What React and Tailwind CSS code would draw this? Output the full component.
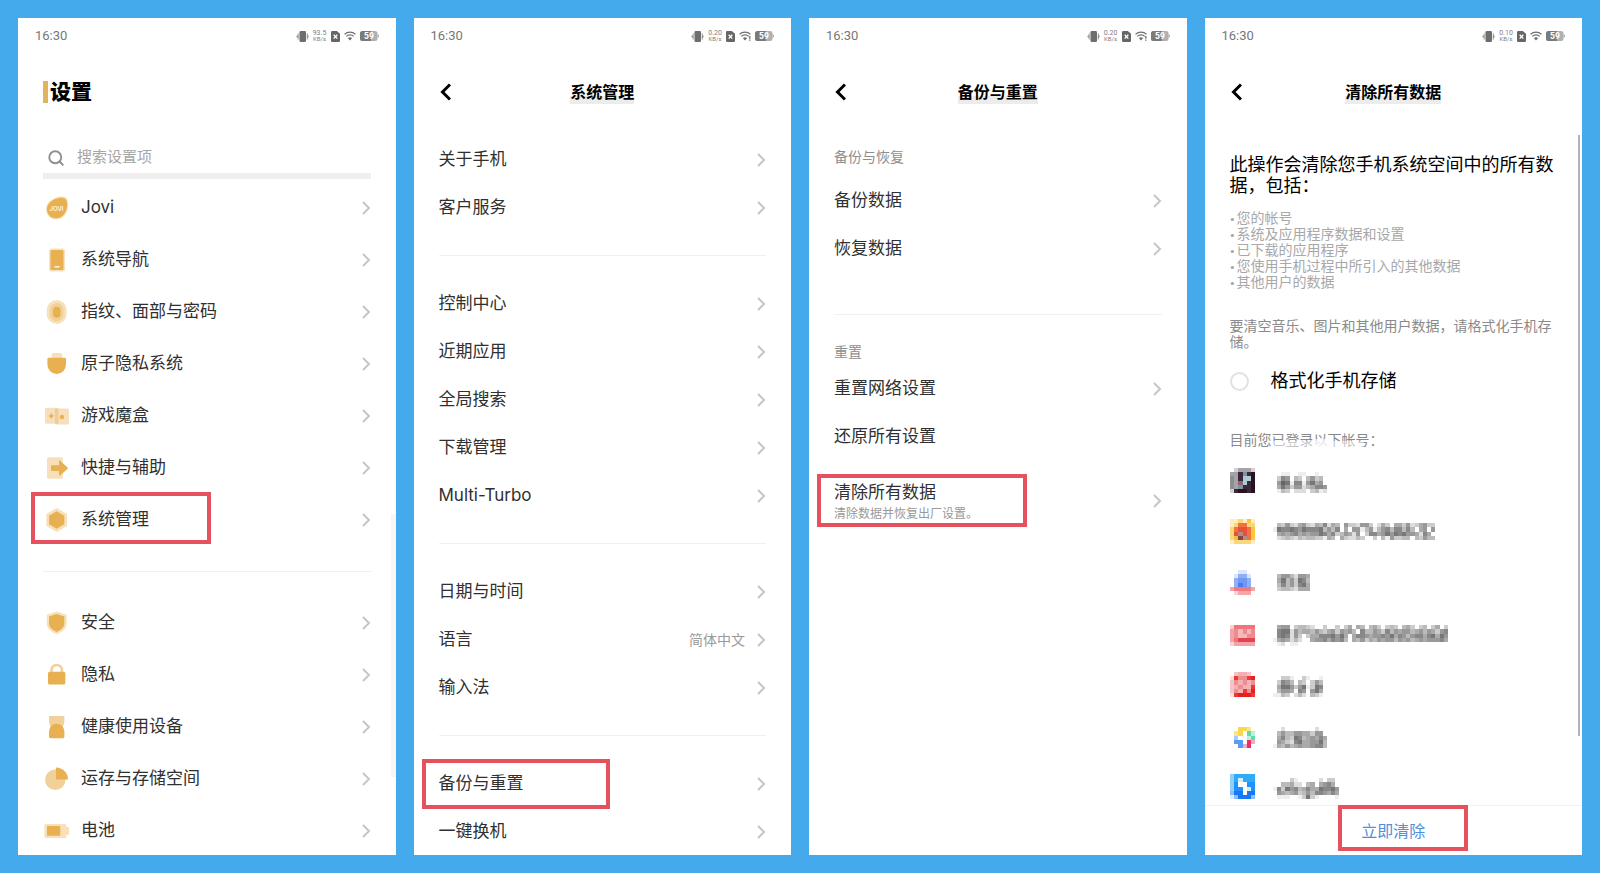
import React from 'react'
import { Search } from 'lucide-react'

const MAIN = '#e8b050'
const SOFT = '#f0d19a'
const PALE = '#f7e1bb'

const icons = {
  jovi: (
    <>
      <path d="M14 .8c6-1 9.200 1.400 9.200 6.800C23.200 17 18.500 23.400 11 23.400 4.800 23.400 1 18.800 1 13 1 6.500 7.500 1.900 14 .8z" fill={PALE} />
      <path d="M14 1.900c5.300-.9 8.200 1.100 8.200 5.900 0 8.600-4.400 14.500-11.200 14.500C5.400 22.300 2 18.200 2 13 2 7.200 8 2.900 14 1.900z" fill={MAIN} />
      <text x="11.500" y="15" textAnchor="middle" fontSize="6" fontWeight="600" fill="#fff7e6">JOVI</text>
    </>
  ),
  nav: (
    <>
      <rect x="4" y=".5" width="16" height="23" rx="2.500" fill={PALE} />
      <rect x="5.500" y="2" width="13" height="20" rx="1.500" fill={MAIN} />
      <rect x="9.500" y="18" width="5" height="1.500" fill="#fff7e6" />
    </>
  ),
  finger: (
    <>
      <rect x="1.700" y="0" width="20" height="24" rx="10" fill={PALE} />
      <rect x="5" y="3" width="13.500" height="18.500" rx="6.700" fill={SOFT} />
      <rect x="8" y="6.700" width="7.500" height="11" rx="3.700" fill={MAIN} />
    </>
  ),
  atom: (
    <>
      <rect x="6.700" y="1" width="10.500" height="6" rx="1" fill={PALE} />
      <path d="M3.500 5.800h16.300a1.200 1.200 0 0 1 1.200 1.200v5.600a9.300 9.300 0 0 1-18.600 0V7a1.200 1.200 0 0 1 1.100-1.200z" fill={MAIN} />
    </>
  ),
  game: (
    <>
      <rect x="0" y="3.700" width="13.500" height="16" rx="1.500" fill="#f6dfba" />
      <rect x="10" y="4.500" width="14" height="16" rx="1.500" fill="#f6dfba" />
      <rect x="10" y="4.500" width="3.500" height="15.200" fill="#edcd95" />
      <path d="M6.300 9.500v5M3.800 12h5" stroke={MAIN} strokeWidth="1.600" />
      <circle cx="16.900" cy="13" r="2.200" fill={MAIN} />
    </>
  ),
  quick: (
    <>
      <rect x="2" y="1.200" width="15.800" height="21.500" rx="1.500" fill="#f6dfba" />
      <path d="M7 9.200h7V5.500c0-.9.800-1.200 1.400-.6l7 6.300c.6.600.6 1.200 0 1.800l-7 6.300c-.6.600-1.400.3-1.400-.6V15H7a1 1 0 0 1-1-1v-3.800a1 1 0 0 1 1-1z" fill={MAIN} />
    </>
  ),
  system: (
    <>
      <path d="M11.700 0l10.300 6v12l-10.300 6L1.300 18V6z" fill={PALE} />
      <path d="M11.700 3.300l7.600 4.400v8.600l-7.600 4.400L4 16.300V7.700z" fill={MAIN} />
    </>
  ),
  shield: (
    <>
      <path d="M11.700.6l10 3.200v8.500c0 5-4 8.700-10 11-6-2.300-10-6-10-11V3.800z" fill={PALE} />
      <path d="M11.700 3l7.600 2.500v6.800c0 3.700-2.900 6.600-7.600 8.600C7 18.900 4 16 4 12.300V5.500z" fill={MAIN} />
    </>
  ),
  lock: (
    <>
      <path d="M6.500 11V7.200a5.200 5.200 0 0 1 10.400 0V11" fill="none" stroke={SOFT} strokeWidth="2.600" />
      <rect x="3" y="8.800" width="17.300" height="12.700" rx="1.500" fill={MAIN} />
    </>
  ),
  health: (
    <>
      <path d="M5 .9h13.400a1 1 0 0 1 1 1V7l-1.500 5H5.500L4 7V1.900a1 1 0 0 1 1-1z" fill={SOFT} />
      <path d="M4 16.500a7.700 7.700 0 0 1 15.400 0v5.300a1.400 1.400 0 0 1-1.400 1.400H5.400A1.400 1.400 0 0 1 4 21.800z" fill={MAIN} />
    </>
  ),
  pie: (
    <>
      <circle cx="10.300" cy="12.800" r="10.200" fill={SOFT} />
      <path d="M11 12.500V.4a12 12 0 0 1 12 12.100z" fill={MAIN} />
    </>
  ),
  battery: (
    <>
      <rect x="-.6" y="5" width="22" height="14" rx="1.500" fill={PALE} />
      <path d="M21 8h2.200a.9.900 0 0 1 .9.900v5.900a.9.900 0 0 1-.9.900H21z" fill={PALE} />
      <rect x="2" y="7" width="13.300" height="9.800" rx=".8" fill={MAIN} />
    </>
  ),
}

const settings = [
  [
    { icon: 'jovi', label: 'Jovi' },
    { icon: 'nav', label: '系统导航' },
    { icon: 'finger', label: '指纹、面部与密码' },
    { icon: 'atom', label: '原子隐私系统' },
    { icon: 'game', label: '游戏魔盒' },
    { icon: 'quick', label: '快捷与辅助' },
    { icon: 'system', label: '系统管理', marked: true },
  ],
  [
    { icon: 'shield', label: '安全' },
    { icon: 'lock', label: '隐私' },
    { icon: 'health', label: '健康使用设备' },
    { icon: 'pie', label: '运存与存储空间' },
    { icon: 'battery', label: '电池' },
  ],
]

const management = [
  [{ label: '关于手机' }, { label: '客户服务' }],
  [
    { label: '控制中心' },
    { label: '近期应用' },
    { label: '全局搜索' },
    { label: '下载管理' },
    { label: 'Multi-Turbo' },
  ],
  [{ label: '日期与时间' }, { label: '语言', value: '简体中文' }, { label: '输入法' }],
  [{ label: '备份与重置', marked: true }, { label: '一键换机' }],
]

const erased = [
  '您的帐号',
  '系统及应用程序数据和设置',
  '已下载的应用程序',
  '您使用手机过程中所引入的其他数据',
  '其他用户的数据',
]

// Icons are 6x6 cells with their own palette, names are grey levels from 0 (white) to 9.
const accounts = [
  {
    palette: { a: '#a3a3a9', b: '#d2d2d6', c: '#3b2836', d: '#84909a', e: '#a9cdd2', f: '#2a1223', g: '#8c6678', h: '#8d8d94' },
    icon: [' baaab', 'aacdcf', 'haceef', 'hagecf', 'hadccf', 'bcffcf'],
    name: ['', '0011001100100', '0376043046340', '0698177168560', '0586366245776', '0143022203412'],
  },
  {
    palette: { a: '#fdedc0', b: '#fbd779', c: '#f7b94a', d: '#ef7340', e: '#e6513a', f: '#7c4a4c', g: '#b98a7c', h: '#fbc53f' },
    icon: ['aabaha', 'abddbb', 'bdeedh', 'begedh', 'bcfgdh', 'abbbba'],
    name: [
      '',
      '0436325632547254063326630253055362356330',
      '1877876877784647050661461467477474056060',
      '0565675656687573465260377568687866527500',
      '0234324344331540532243003041633440436440',
      '',
    ],
  },
  {
    palette: { a: '#dbe6fd', b: '#8fb0f8', c: '#6f98f5', d: '#4b7df0', e: '#f6a5a8', f: '#f07a80', g: '#fbd5d6' },
    icon: ['  aa  ', ' abba ', ' bccb ', ' bdcb ', 'effffe', ' geee '],
    name: ['', '046642665', '058463874', '047463785', '034432555', ''],
  },
  {
    palette: { a: '#fad0d3', b: '#f0757b', c: '#ee8b91', d: '#f5b8bb', e: '#e2444f', f: '#f3a2a7' },
    icon: ['', 'abbbbb', 'fcdcdc', 'fcddcc', 'fbeeee', 'afffff'],
    name: [
      '',
      '0566034432003003035054045303430453034035030',
      '0788264554643563656407446537465664564653670',
      '0787263035577786850577656676857646775785860',
      '1565242005667576740546354656646564565666750',
      '0120110000000000000000000000000000000000000',
    ],
  },
  {
    palette: { a: '#f7c3c5', b: '#e93a38', c: '#ee8e90', d: '#e6201c', e: '#f3b1b3', f: '#fbdedf' },
    icon: [' aeea ', 'fbccbd', 'acecec', 'aeceeb', 'acebcd', 'fbdddb'],
    name: ['', '0033100310010', '0376404303640', '0588636813870', '0466507606850', '1143024204310'],
  },
  {
    palette: { a: '#fbe48a', b: '#f9d84e', c: '#5edca4', d: '#bdf0d9', e: '#5b9cf3', f: '#e62f6b', g: '#a9cbf9', h: '#f6a9c2' },
    icon: ['', '  bba ', ' ab cd', ' g  dc', ' ee fh', '  ehf '],
    name: ['', '0020000000200', '0464466553660', '0574387456575', '0653278556684', '1546456556774'],
  },
  {
    palette: { a: '#8fd0fb', b: '#2fabf8', c: '#1f93fa', d: '#d6ecfd', e: '#ffffff', f: '#1678f8', g: '#8dbcfb' },
    icon: ['abbbbb', 'abdbbb', 'aceecc', 'accedc', 'gffeff', 'dgfffg'],
    name: ['', '0000310000020330', '0044522045056750', '1738674575587786', '0654563464776575', '0111001383100001'],
  },
]

const grey = (level) => {
  const v = 255 - Number(level) * 17
  return `rgb(${v},${v},${v})`
}

const Mosaic = ({ rows, color, label }) => {
  const cols = Math.max(...rows.map((row) => row.length))
  return (
    <svg className="h-[25px] w-auto shrink-0" viewBox={`0 0 ${cols} 6`} shapeRendering="crispEdges" role="img" aria-label={label}>
      {rows.map((row, y) =>
        [...row].map((cell, x) =>
          cell === ' ' || cell === '0' ? null : (
            <rect key={`${x}-${y}`} x={x} y={y} width="1" height="1" fill={color(cell)} />
          )
        )
      )}
    </svg>
  )
}

const Chevron = () => (
  <svg className="h-[14px] w-[9px] shrink-0" viewBox="0 0 9 14" fill="none" stroke="#c6c6c6" strokeWidth="2">
    <path d="M1 1l6 6-6 6" />
  </svg>
)

const Mark = ({ className }) => (
  <span className={`pointer-events-none absolute border-4 border-[#e5525d] ${className}`} />
)

const StatusBar = ({ speed, alert }) => (
  <div className="flex h-[34px] shrink-0 items-center justify-between px-[17px] pt-[2px] text-[#777]">
    <time className="font-[Roboto] text-[13px]">16:30</time>
    <div className="flex items-center gap-1">
      <svg className="h-[11px] w-[13px]" viewBox="0 0 13 11" fill="#6e6e6e">
        <rect x="3.500" y="0" width="6.500" height="11" rx="1.200" />
        <path d="M2.700 2.500v6h-1v-1.800L0 5.500l1.700-1.200V2.500zM10.800 2.500v6h1V6.700L13 5.500l-1.200-1.200V2.500z" opacity=".75" />
      </svg>
      <div className="w-[14px] text-center font-[Roboto] text-[7px] leading-[6px] text-[#808080]">
        <p>{speed}</p>
        <p className="text-[6px]">KB/s</p>
      </div>
      <svg className="h-[11px] w-[9px]" viewBox="0 0 9 11">
        <path d="M1.200 0h4.600L9 2.800v7A1.200 1.200 0 0 1 7.800 11H1.200A1.200 1.200 0 0 1 0 9.800V1.200A1.200 1.200 0 0 1 1.200 0z" fill="#666" />
        <path d="M2.700 3.800l3.600 3.800M6.300 3.800L2.700 7.600" stroke="#fff" strokeWidth="1.300" />
      </svg>
      <svg className="h-[10px] w-3" viewBox="0 0 12 10" fill="none" stroke="#6e6e6e" strokeWidth="1.300">
        <path d="M.5 3.400a7.800 7.800 0 0 1 11 0M2.300 5.400a5.200 5.200 0 0 1 7.400 0" />
        <path d="M6 9.500L3.900 7.300a3 3 0 0 1 4.200 0z" fill="#6e6e6e" stroke="none" />
        {alert && <path d="M10.800 5v2.700M10.800 8.500v1.200" />}
      </svg>
      <svg className="h-[10px] w-[19px]" viewBox="0 0 19 10">
        <rect x="0" y="0" width="17.500" height="10" rx="2.500" fill="#b0b0b0" />
        <path d="M2.500 0H11v10H2.500A2.500 2.500 0 0 1 0 7.500v-5A2.500 2.500 0 0 1 2.500 0z" fill="#7a7a7a" />
        <path d="M17.500 3.200l1.500.8v2l-1.500.8z" fill="#b0b0b0" />
        <text x="9" y="8" textAnchor="middle" fontSize="8.500" fontWeight="800" fontFamily="Roboto, sans-serif" fill="#fff">59</text>
      </svg>
    </div>
  </div>
)

const Screen = ({ speed, alert, children }) => (
  <section className="relative flex min-w-0 flex-col overflow-hidden bg-white">
    <StatusBar speed={speed} alert={alert} />
    {children}
  </section>
)

const TitleBar = ({ title }) => (
  <header className="grid h-20 shrink-0 grid-cols-[1fr_auto_1fr] items-center px-[25px]">
    <button type="button" aria-label="返回" className="w-fit">
      <svg className="h-[18px] w-3" viewBox="0 0 12 18" fill="none" stroke="#000" strokeWidth="3">
        <path d="M11 1.500L3.500 9l7.500 7.500" />
      </svg>
    </button>
    <h2 className="bg-[linear-gradient(transparent_65%,#ececec_65%)] text-base font-bold text-black">{title}</h2>
  </header>
)

const Divider = ({ className }) => <hr className={`h-px shrink-0 border-0 bg-[#f0f0f0] ${className}`} />

const Row = ({ label, value, marked, arrow = true, mark }) => (
  <button type="button" className="relative flex h-12 w-full shrink-0 items-center gap-3 text-left">
    <span className="flex-1 text-[17px]">{label}</span>
    {value && <span className="text-sm text-[#9a9a9a]">{value}</span>}
    {arrow && <Chevron />}
    {marked && <Mark className={mark} />}
  </button>
)

const SettingsScreen = () => (
  <Screen speed="93.5">
    <header className="flex h-20 shrink-0 items-center gap-[2px] px-[25px]">
      <span className="h-[22px] w-[5px] bg-[#e2b25c]" />
      <h1 className="text-[21px] font-black text-black">设置</h1>
    </header>
    <div className="px-[25px]">
      <label className="flex h-[47px] items-center gap-3 border-b-6 border-[#efefef] pt-[10px] pl-1">
        <Search className="h-[18px] w-[18px] text-[#8e8e8e]" strokeWidth={2.5} />
        <input
          type="search"
          aria-label="搜索设置项"
          placeholder="搜索设置项"
          className="min-w-0 flex-1 text-[15px] outline-none placeholder:text-[#a6a6a6]"
        />
      </label>
      <div className="pt-[3px]">
        {settings.map((group, i) => (
          <React.Fragment key={i}>
            {i > 0 && <Divider className="my-[25px]" />}
            {group.map(({ icon, label, marked }) => (
              <button key={label} type="button" className="relative flex h-[52px] w-full items-center gap-3 pl-[2px] text-left">
                <svg className="h-6 w-6 shrink-0 overflow-visible" viewBox="0 0 24 24">{icons[icon]}</svg>
                <span className="flex-1 text-[17px]">{label}</span>
                <Chevron />
                {marked && <Mark className="-top-[2px] -left-3 h-[52px] w-[180px]" />}
              </button>
            ))}
          </React.Fragment>
        ))}
      </div>
    </div>
    <span className="absolute top-[496px] right-0 h-[263px] w-[5px] bg-[#f6f6f6]" />
  </Screen>
)

const ManagementScreen = () => (
  <Screen speed="0.20" alert>
    <TitleBar title="系统管理" />
    <div className="px-[25px] pt-1">
      {management.map((group, i) => (
        <React.Fragment key={i}>
          {i > 0 && <Divider className="mt-[23px] mb-6" />}
          {group.map((row) => (
            <Row key={row.label} {...row} mark="-top-px -left-[17px] h-[50px] w-[188px]" />
          ))}
        </React.Fragment>
      ))}
    </div>
  </Screen>
)

const BackupScreen = () => (
  <Screen speed="0.20" alert>
    <TitleBar title="备份与重置" />
    <div className="px-[25px] pt-[15px]">
      <h3 className="mb-[10px] text-sm text-[#8e8e8e]">备份与恢复</h3>
      <Row label="备份数据" />
      <Row label="恢复数据" />
      <Divider className="mt-[41px] mb-[27px]" />
      <h3 className="mb-[3px] text-sm text-[#8e8e8e]">重置</h3>
      <Row label="重置网络设置" />
      <Row label="还原所有设置" arrow={false} />
      <button type="button" className="relative flex h-20 w-full items-center text-left">
        <span className="flex-1 pt-[2px]">
          <span className="block text-[17px] leading-6">清除所有数据</span>
          <span className="block text-xs leading-5 text-[#999]">清除数据并恢复出厂设置。</span>
        </span>
        <Chevron />
        <Mark className="top-[13px] -left-[17px] h-[53px] w-[210px]" />
      </button>
    </div>
  </Screen>
)

const EraseScreen = () => (
  <Screen speed="0.10">
    <TitleBar title="清除所有数据" />
    <div className="min-h-0 flex-1 overflow-hidden px-[25px] pt-[22px]">
      <p className="text-lg leading-[21px] text-black">此操作会清除您手机系统空间中的所有数据，包括：</p>
      <ul className="mt-[14px] text-sm leading-4 text-[#a8a8a8]">
        {erased.map((item) => (
          <li key={item} className="flex">
            <span className="w-[7px] text-[10px]">•</span>
            {item}
          </li>
        ))}
      </ul>
      <p className="mt-7 text-sm leading-4 text-[#8a8a8a]">要清空音乐、图片和其他用户数据，请格式化手机存储。</p>
      <label className="mt-[19px] flex h-6 items-center gap-[22px] text-lg text-black">
        <input type="radio" name="format" className="h-[19px] w-[19px] appearance-none rounded-full border-2 border-[#e2e2e2]" />
        格式化手机存储
      </label>
      <div className="relative mt-[37px]">
        <p className="text-sm text-[#8a8a8a]">目前您已登录以下帐号：</p>
        <span className="absolute top-[11px] left-[42px] h-2 w-[92px] bg-white/50" />
        <span className="absolute top-[9px] left-[82px] h-2 w-4 bg-white/60" />
      </div>
      <ul className="mt-[5px]">
        {accounts.map(({ palette, icon, name }, i) => (
          <li key={i} className="flex h-[51px] items-center gap-[18px]">
            <Mosaic rows={icon} color={(cell) => palette[cell]} label="应用图标" />
            <Mosaic rows={name} color={grey} label="帐号名称" />
          </li>
        ))}
      </ul>
    </div>
    <footer className="flex h-[50px] shrink-0 items-center justify-center border-t border-[#f2f2f2]">
      <button type="button" className="relative text-base text-[#4f8fdc]">
        立即清除
        <Mark className="-top-[14px] -left-[23px] h-[46px] w-[130px]" />
      </button>
    </footer>
    <span className="absolute top-[117px] right-[2px] h-[601px] w-[2px] bg-[#b3b3b3]" />
  </Screen>
)

const App = () => {
  return (
    <main
      lang="zh-CN"
      className="grid h-screen grid-cols-4 gap-[18px] bg-[#45aaec] p-[18px] font-['Inter','Noto_Sans_CJK_SC',sans-serif] text-[#303030]"
    >
      <SettingsScreen />
      <ManagementScreen />
      <BackupScreen />
      <EraseScreen />
    </main>
  )
}

export default App
